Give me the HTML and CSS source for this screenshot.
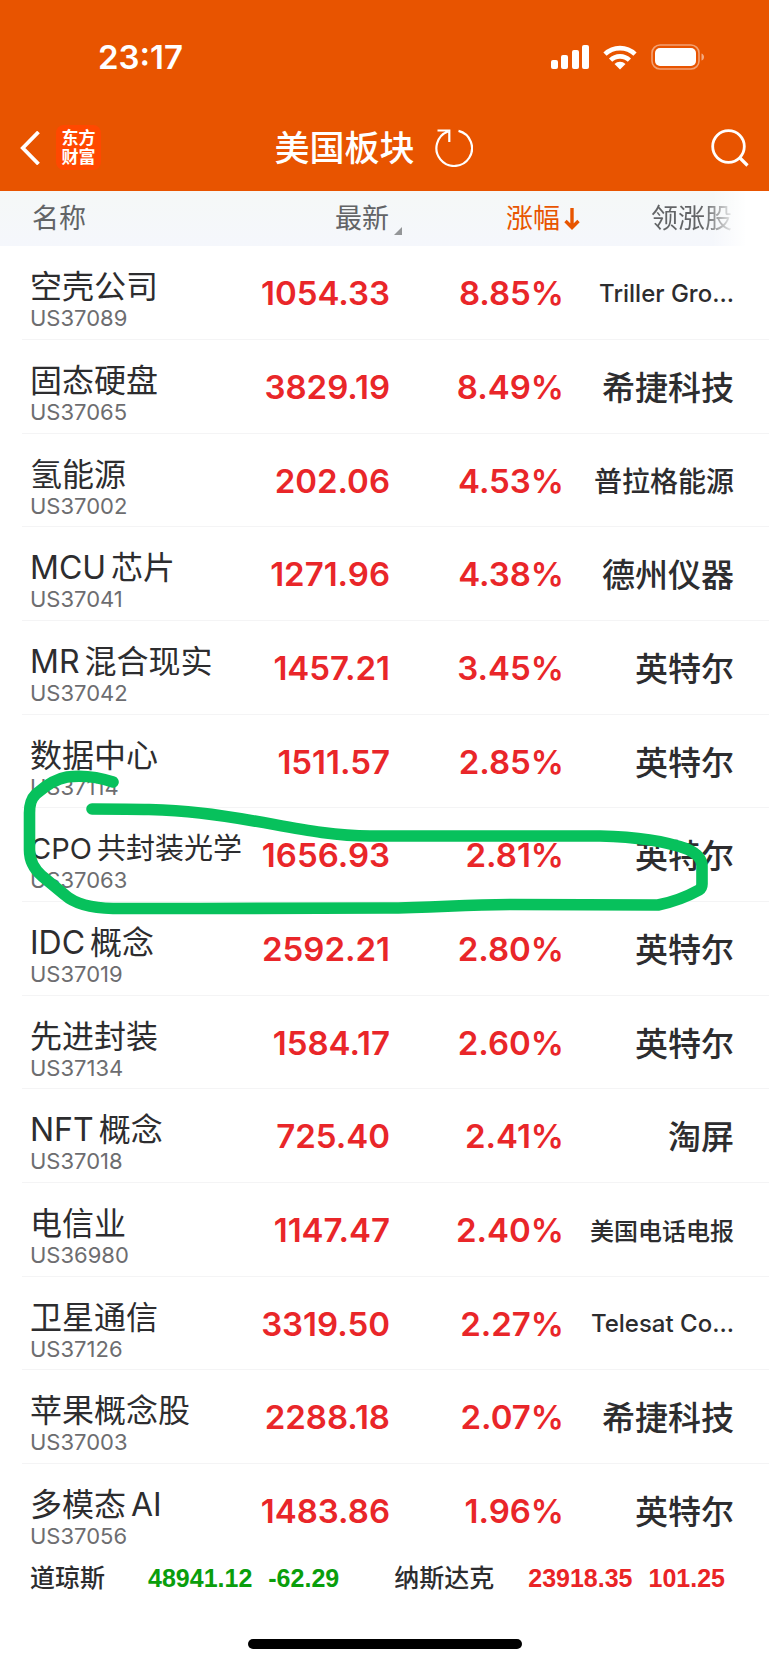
FILE: index.html
```html
<!DOCTYPE html>
<html lang="zh-CN">
<head>
<meta charset="utf-8">
<meta name="viewport" content="width=device-width, initial-scale=1">
<title>美国板块</title>
<link rel="stylesheet" href="styles.css">
</head>
<body>
<header class="top">
  <div class="status">
    <time class="clock">23:17</time>
    <div class="status-icons">
      <svg width="38" height="25" viewBox="0 0 38 25" fill="#fff" aria-hidden="true">
        <rect x="0" y="15" width="7" height="9" rx="2"/><rect x="10" y="10" width="7" height="14" rx="2"/><rect x="21" y="5" width="7" height="19" rx="2"/><rect x="31" y="0" width="7" height="24" rx="2"/>
      </svg>
      <svg width="34" height="25" viewBox="0 0 34 25" aria-hidden="true">
        <g fill="none" stroke="#fff" stroke-width="4.6"><path d="M2 9.2a21.5 21.5 0 0 1 30 0"/><path d="M7.6 15.2a13.4 13.4 0 0 1 18.8 0"/></g>
        <path d="M11.5 19a8 8 0 0 1 11 0L17 24.6Z" fill="#fff"/>
      </svg>
      <svg width="54" height="26" viewBox="0 0 54 26" aria-hidden="true">
        <rect x="1" y="1" width="47" height="24" rx="8" fill="none" stroke="#fff" stroke-opacity=".45" stroke-width="1.6"/>
        <rect x="4" y="4" width="41" height="18" rx="5" fill="#fff"/><path d="M50.5 9.5c3.4 1 3.4 6 0 7Z" fill="#fff" fill-opacity=".5"/>
      </svg>
    </div>
  </div>
  <nav class="bar">
    <div class="bar-left">
      <button class="icon-btn" type="button" aria-label="返回"><svg width="20" height="34" viewBox="0 0 20 34" fill="none" stroke="#fff" stroke-width="3.8"><path d="M18.500 1 2.800 17l15.700 16"/></svg></button>
      <span class="logo">东方<br>财富</span>
    </div>
    <div class="bar-mid">
      <h1 class="title">美国板块</h1>
      <button class="icon-btn" type="button" aria-label="刷新"><svg width="38" height="38" viewBox="0 0 38 38" fill="none" stroke="#fff" stroke-width="2.200"><path d="M23.500 1.900A17.800 17.800 0 1 1 13 2.500M2.500 1.500h11.800v11.500"/></svg></button>
    </div>
    <div class="bar-right">
      <button class="icon-btn" type="button" aria-label="搜索"><svg width="38" height="38" viewBox="0 0 38 38" fill="none" stroke="#fff" stroke-width="2.800"><circle cx="17.500" cy="17.500" r="15.800"/><path d="m28.500 28.500 8 8" stroke-width="3.200"/></svg></button>
    </div>
  </nav>
</header>
<main class="board">
  <table class="quotes">
    <thead>
      <tr>
        <th class="c-name" scope="col"><span class="sort">名称</span></th>
        <th class="c-price" scope="col"><button class="sort" type="button">最新<svg class="corner" width="8" height="8" viewBox="0 0 8 8"><path d="M8 0v8H0Z" fill="#949698"/></svg></button></th>
        <th class="c-pct" scope="col" aria-sort="descending"><button class="sort sort-on" type="button">涨幅<svg width="16" height="22" viewBox="0 0 16 22" fill="none" stroke="#e85500" stroke-width="3.400"><path d="M8 0v19M1.500 13 8 19.500 14.500 13"/></svg></button></th>
        <th class="c-lead" scope="col"><button class="sort" type="button">领涨股</button></th>
      </tr>
    </thead>
    <tbody>
      <tr><td><div class="name">空壳公司</div><div class="code">US37089</div></td><td class="num">1054.33</td><td class="num pct">8.85%</td><td class="lead lead-en">Triller Gro...</td></tr>
      <tr><td><div class="name">固态硬盘</div><div class="code">US37065</div></td><td class="num">3829.19</td><td class="num pct">8.49%</td><td class="lead">希捷科技</td></tr>
      <tr><td><div class="name">氢能源</div><div class="code">US37002</div></td><td class="num">202.06</td><td class="num pct">4.53%</td><td class="lead lead-m">普拉格能源</td></tr>
      <tr><td><div class="name">MCU<span class="han">芯片</span></div><div class="code">US37041</div></td><td class="num">1271.96</td><td class="num pct">4.38%</td><td class="lead">德州仪器</td></tr>
      <tr><td><div class="name">MR<span class="han">混合现实</span></div><div class="code">US37042</div></td><td class="num">1457.21</td><td class="num pct">3.45%</td><td class="lead">英特尔</td></tr>
      <tr><td><div class="name">数据中心</div><div class="code">US37114</div></td><td class="num">1511.57</td><td class="num pct">2.85%</td><td class="lead">英特尔</td></tr>
      <tr><td><div class="name name-m">CPO<span class="han">共封装光学</span></div><div class="code">US37063</div></td><td class="num">1656.93</td><td class="num pct">2.81%</td><td class="lead">英特尔</td></tr>
      <tr><td><div class="name">IDC<span class="han">概念</span></div><div class="code">US37019</div></td><td class="num">2592.21</td><td class="num pct">2.80%</td><td class="lead">英特尔</td></tr>
      <tr><td><div class="name">先进封装</div><div class="code">US37134</div></td><td class="num">1584.17</td><td class="num pct">2.60%</td><td class="lead">英特尔</td></tr>
      <tr><td><div class="name">NFT<span class="han">概念</span></div><div class="code">US37018</div></td><td class="num">725.40</td><td class="num pct">2.41%</td><td class="lead">淘屏</td></tr>
      <tr><td><div class="name">电信业</div><div class="code">US36980</div></td><td class="num">1147.47</td><td class="num pct">2.40%</td><td class="lead lead-s">美国电话电报</td></tr>
      <tr><td><div class="name">卫星通信</div><div class="code">US37126</div></td><td class="num">3319.50</td><td class="num pct">2.27%</td><td class="lead lead-en">Telesat Co...</td></tr>
      <tr><td><div class="name">苹果概念股</div><div class="code">US37003</div></td><td class="num">2288.18</td><td class="num pct">2.07%</td><td class="lead">希捷科技</td></tr>
      <tr><td><div class="name"><span class="han-start">多模态</span>AI</div><div class="code">US37056</div></td><td class="num">1483.86</td><td class="num pct">1.96%</td><td class="lead">英特尔</td></tr>
    </tbody>
  </table>
  <svg class="marker" viewBox="0 0 769 160" preserveAspectRatio="none" fill="none" stroke="#07c15c" stroke-width="11.600" stroke-linecap="round" stroke-linejoin="round" aria-hidden="true">
    <path d="M113 22C98 17 83 15 67 17 54 19 44 27 36 34 31 39 29.500 44 29.500 53V90C29.500 101 34 109 42 116L65 135C75 144 91 148 113 148.500H200L385 148C435 148 460 144.500 510 144.500L658 145C673 142 690 135 699 130Q702 128 702 124V106C702 98 696 93 687 89 665 81 640 77 600 76H370C315 76 265 60 200 53 165 49 135 49 92 49"/>
  </svg>
</main>
<footer class="indices">
  <div class="index"><span class="index-name">道琼斯</span><span class="figures down"><span>48941.12</span><span>-62.29</span></span></div>
  <div class="index"><span class="index-name">纳斯达克</span><span class="figures up"><span>23918.35</span><span>101.25</span></span></div>
</footer>
<div class="home"></div>
</body>
</html>
```
FILE: styles.css
```css
* { box-sizing: border-box; }

body {
  margin: 0;
  min-height: 100vh;
  display: flex;
  flex-direction: column;
  background: #fff;
  color: #2d2d2f;
  font-family: Inter, "Noto Sans CJK SC", sans-serif;
}

button {
  margin: 0;
  padding: 0;
  border: 0;
  background: none;
  color: inherit;
  font: inherit;
  cursor: pointer;
}

svg { display: block; flex: none; }

.top { background: #e85400; color: #fff; padding-top: 36px; }

.status {
  display: flex;
  justify-content: space-between;
  align-items: center;
  height: 42px;
  padding: 0 64px 0 98px;
}

.clock { font-size: 33px; font-weight: 600; line-height: 42px; }

.status-icons { display: flex; align-items: center; gap: 14px; }

.bar {
  display: grid;
  grid-template-columns: 1fr auto 1fr;
  align-items: center;
  height: 113px;
  padding: 26px 20px 0;
}

.bar-left { display: flex; align-items: center; gap: 16px; }
.bar-mid { display: flex; align-items: center; gap: 20px; margin-right: 22px; }
.bar-right { display: flex; justify-content: flex-end; }
.icon-btn { display: flex; }

.logo {
  width: 45px;
  height: 45px;
  padding-top: 4px;
  border-radius: 8px;
  background: #ff4800;
  font-size: 17px;
  font-weight: 700;
  line-height: 19px;
  text-align: center;
}

.title { margin: 0; font-size: 35px; font-weight: 500; line-height: 44px; }

.board { position: relative; }

.quotes { width: 100%; border-collapse: separate; border-spacing: 0; table-layout: fixed; }

th, td { padding: 0; white-space: nowrap; }

th {
  height: 55px;
  padding-top: 1px;
  background: linear-gradient(#f5f8f7, #f5f7fc);
  color: #626466;
  font-size: 27px;
  font-weight: 400;
  text-align: right;
}

.c-name { padding-left: 32px; text-align: left; }
.c-price { width: 156px; }
.c-pct { width: 178px; }
.c-lead {
  width: 189px;
  padding-right: 37px;
  background: linear-gradient(90deg, transparent 70%, #fff 88%), linear-gradient(#f5f8f7, #f5f7fc);
}
.c-lead .sort {
  background: linear-gradient(90deg, #626466 65%, #e8e9ea);
  background-clip: text;
  color: transparent;
}

.sort { display: inline-flex; align-items: center; gap: 5px; line-height: 38px; vertical-align: middle; }
.sort-on { gap: 4px; color: #e85500; }
.corner { align-self: flex-end; margin-bottom: 3px; }

tbody tr { height: 94px; }
tbody tr:nth-child(3n) { height: 93px; }

td {
  background: linear-gradient(#f4f4f5, #f4f4f5) 0 100% / 100% 1px no-repeat;
  text-align: right;
}
td:first-child {
  padding: 21px 0 0 30px;
  background-position: 22px 100%;
  text-align: left;
  vertical-align: top;
}
tbody tr:last-child td { background: none; }

.name { font-size: 32px; font-weight: 400; line-height: 40px; height: 40px; }
.name-m { font-size: 29px; }
.han { margin-left: 5px; }
.han-start { margin-right: 5px; }
.code { color: #6d6d70; font-size: 22px; font-weight: 400; line-height: 22px; }

.num { padding: 0 12px 0 0; color: #e92629; font-size: 33px; font-weight: 600; }
.pct { padding-right: 16px; }

.lead { padding: 0 35px 2px 0; font-size: 33px; font-weight: 500; }
.lead-m { font-size: 28px; }
.lead-s { font-size: 24px; }
.lead-en { padding-bottom: 0; font-size: 24px; }

.marker {
  position: absolute;
  top: 569px;
  left: 0;
  width: 100%;
  height: 160px;
  pointer-events: none;
}

.indices {
  display: flex;
  justify-content: space-between;
  padding: 0 44px 0 30px;
  font-size: 25px;
  line-height: 40px;
}
.index { display: flex; gap: 34px; }
.index:first-child { gap: 43px; }
.index-name { font-weight: 500; }
.figures { display: flex; gap: 16px; font-family: "Liberation Sans", Arial, sans-serif; font-weight: 700; }
.down { color: #0a9e0c; }
.up { color: #ea2426; }

.home {
  width: 274px;
  height: 10px;
  margin: auto auto 16px;
  border-radius: 5px;
  background: #000;
}
```
